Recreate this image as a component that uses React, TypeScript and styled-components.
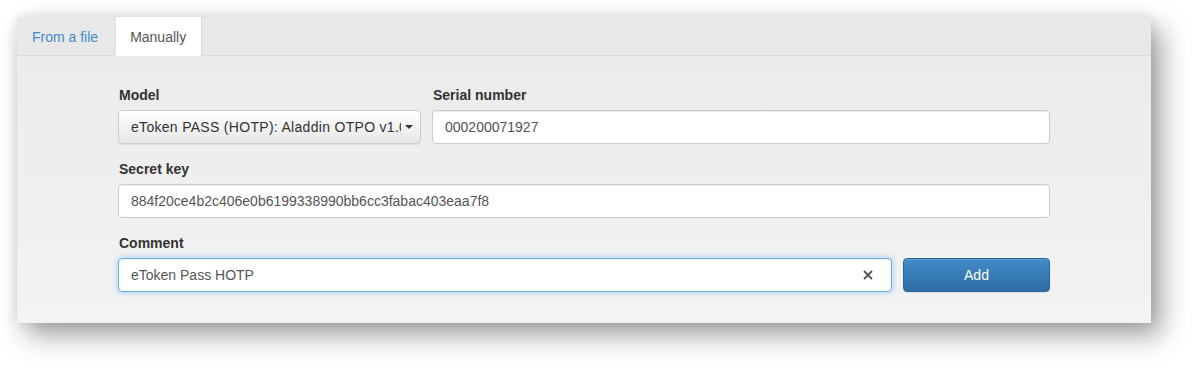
import React from "react";
import styled, { createGlobalStyle } from "styled-components";

const Global = createGlobalStyle`
  html, body { margin: 0; padding: 0; background: #fff; }
  body { font-family: "Liberation Sans", Arial, sans-serif; font-size: 14px; color: #333; }
  * { box-sizing: border-box; }
`;

const Page = styled.div`
  width: 1199px;
  height: 371px;
  padding: 17px 48px 48px 17px;
`;

const Panel = styled.div`
  width: 1134px;
  height: 306px;
  display: flex;
  flex-direction: column;
  background: #f0f0f0;
  box-shadow: 0 0 12px rgba(0, 0, 0, 0.1), 10px 12px 26px rgba(0, 0, 0, 0.38);
`;

const TabBar = styled.div`
  display: flex;
  height: 39px;
  background: #e8e8e8;
  border-bottom: 1px solid #dadada;
`;

const Tab = styled.div<{ $active?: boolean }>`
  height: 39px;
  margin-right: 2px;
  padding: 0 15px 0 14px;
  display: flex;
  align-items: center;
  font-size: 14px;
  color: ${(p) => (p.$active ? "#555" : "#428bca")};
  background: ${(p) => (p.$active ? "#fff" : "transparent")};
  border-left: 1px solid ${(p) => (p.$active ? "#e2e2e2" : "transparent")};
  border-right: 1px solid ${(p) => (p.$active ? "#dcdcdc" : "transparent")};
  &:first-child { padding-right: 15px; margin-right: 1px; }
`;

const Body = styled.div`
  flex: 1;
  padding: 29px 101px 0 101px;
  background: linear-gradient(#ebebeb, #f3f3f3);
`;

const Row = styled.div<{ $cols: string }>`
  display: grid;
  grid-template-columns: ${(p) => p.$cols};
  column-gap: 11px;
  margin-bottom: 15px;
  align-items: end;
`;

const Field = styled.div`
  display: flex;
  flex-direction: column;
`;

const Label = styled.label`
  display: block;
  height: 20px;
  line-height: 20px;
  margin-bottom: 5px;
  font-weight: bold;
  font-size: 14px;
  color: #333;
  padding-left: 1px;
`;

const Select = styled.div`
  height: 34px;
  display: flex;
  align-items: center;
  padding: 0 7px 0 12px;
  border: 1px solid #ccc;
  border-radius: 4px;
  background: linear-gradient(#ffffff, #e6e6e6);
  box-shadow: inset 0 1px 0 rgba(255, 255, 255, 0.15), 0 1px 1px rgba(0, 0, 0, 0.075);
  color: #333;
  font-size: 14px;
`;

const SelectText = styled.span`
  flex: 1;
  white-space: nowrap;
  overflow: hidden;
  letter-spacing: 0.3px;
  margin-right: 4px;
`;

const Caret = styled.span`
  width: 0;
  height: 0;
  border-left: 4px solid transparent;
  border-right: 4px solid transparent;
  border-top: 4px solid #333;
`;

const Input = styled.div<{ $focus?: boolean }>`
  height: 34px;
  display: flex;
  align-items: center;
  padding: 0 12px;
  background: #fff;
  border: 1px solid ${(p) => (p.$focus ? "#66afe9" : "#ccc")};
  border-radius: 4px;
  box-shadow: ${(p) =>
    p.$focus
      ? "inset 0 1px 1px rgba(0,0,0,.075), 0 0 6px rgba(102,175,233,.6)"
      : "inset 0 1px 1px rgba(0,0,0,.075)"};
  color: #555;
  font-size: 14px;
`;

const InputText = styled.span`
  flex: 1;
`;

const Clear = styled.span`
  display: flex;
  width: 10px;
  height: 10px;
  margin-right: 6px;
`;

const Button = styled.div`
  height: 34px;
  display: flex;
  align-items: center;
  justify-content: center;
  border: 1px solid #2b669a;
  border-radius: 4px;
  background: linear-gradient(#428bca, #2d6ca2);
  box-shadow: inset 0 1px 0 rgba(255, 255, 255, 0.15), 0 1px 1px rgba(0, 0, 0, 0.075);
  color: #fff;
  font-size: 14px;
`;

export default function App() {
  return (
    <>
      <Global />
      <Page>
        <Panel>
          <TabBar>
            <Tab>From a file</Tab>
            <Tab $active>Manually</Tab>
          </TabBar>
          <Body>
            <Row $cols="303px 1fr">
              <Field>
                <Label>Model</Label>
                <Select>
                  <SelectText>eToken PASS (HOTP): Aladdin OTPO v1.0</SelectText>
                  <Caret />
                </Select>
              </Field>
              <Field>
                <Label>Serial number</Label>
                <Input>
                  <InputText>000200071927</InputText>
                </Input>
              </Field>
            </Row>
            <Row $cols="1fr">
              <Field>
                <Label>Secret key</Label>
                <Input>
                  <InputText>884f20ce4b2c406e0b6199338990bb6cc3fabac403eaa7f8</InputText>
                </Input>
              </Field>
            </Row>
            <Row $cols="774px 1fr">
              <Field>
                <Label>Comment</Label>
                <Input $focus>
                  <InputText>eToken Pass HOTP</InputText>
                  <Clear>
                    <svg width="10" height="10" viewBox="0 0 10 10">
                      <path d="M1 1 L9 9 M9 1 L1 9" stroke="#555" strokeWidth="1.8" fill="none" />
                    </svg>
                  </Clear>
                </Input>
              </Field>
              <Button>Add</Button>
            </Row>
          </Body>
        </Panel>
      </Page>
    </>
  );
}
